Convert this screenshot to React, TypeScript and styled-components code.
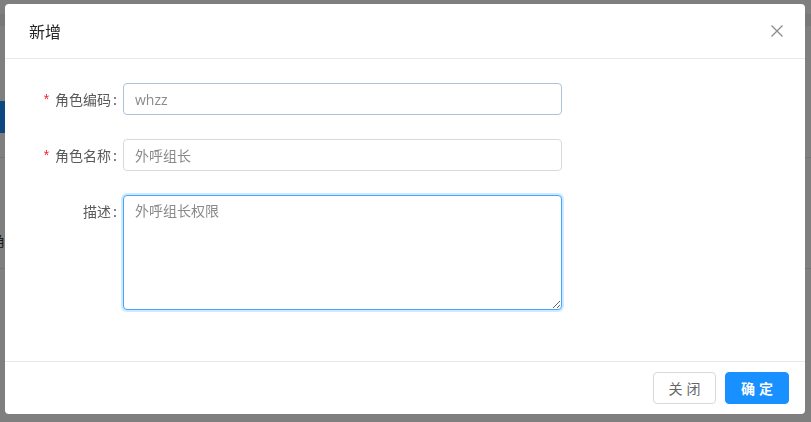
import React from 'react';
import styled, { createGlobalStyle } from 'styled-components';

const GlobalStyle = createGlobalStyle`
  html, body {
    margin: 0;
    padding: 0;
    height: 100%;
    overflow: hidden;
  }
  body {
    font-family: "Liberation Sans", "Noto Sans CJK SC", sans-serif;
    font-size: 14px;
    background: #fff;
  }
  #root {
    height: 100%;
  }
`;

// page behind the mask
const Page = styled.div`
  height: 100%;
  display: flex;
  flex-direction: column;
`;

const PageTop = styled.div`
  height: 14px;
  background: #fff;
`;

const PageHeader = styled.div`
  height: 12px;
  background: #f0f0f0;
`;

const PageBody = styled.div`
  padding-top: 75px;
  display: flex;
  flex-direction: column;
`;

const SideItem = styled.div<{ $active?: boolean }>`
  height: 32px;
  width: 120px;
  background: ${p => (p.$active ? '#1890ff' : 'transparent')};
`;

const RowLine = styled.div<{ $h: number }>`
  height: ${p => p.$h}px;
  border-bottom: 1px solid #e8e8e8;
  font-size: 14px;
  display: flex;
  align-items: flex-end;
  padding-bottom: 18px;
  box-sizing: border-box;
  margin-left: -9px;
  font-family: "Noto Sans CJK SC", sans-serif;
  color: #333;
`;

// modal
const Mask = styled.div`
  position: fixed;
  inset: 0;
  background: rgba(0, 0, 0, 0.5);
  display: flex;
  align-items: flex-start;
  justify-content: flex-start;
  padding: 4px 0 0 5px;
`;

const Dialog = styled.div`
  width: 800px;
  height: 410px;
  background: #fff;
  border-radius: 4px;
  display: flex;
  flex-direction: column;
  overflow: hidden;
`;

const Header = styled.div`
  height: 54px;
  border-bottom: 1px solid #e8e8e8;
  display: flex;
  align-items: center;
  justify-content: space-between;
  padding: 0 18px 0 24px;
`;

const Title = styled.div`
  font-family: "Noto Sans CJK SC", sans-serif;
  font-size: 16px;
  color: #262626;
`;

const CloseButton = styled.button`
  border: none;
  background: none;
  padding: 0;
  width: 20px;
  height: 20px;
  display: flex;
  align-items: center;
  justify-content: center;
  color: #8c8c8c;
  cursor: pointer;
`;

const Body = styled.div`
  flex: 1;
  padding: 24px 24px 0 24px;
  display: flex;
  flex-direction: column;
  gap: 24px;
`;

const FormRow = styled.div<{ $top?: boolean }>`
  display: flex;
  align-items: ${p => (p.$top ? 'flex-start' : 'center')};
`;

const Label = styled.label<{ $top?: boolean }>`
  width: 94px;
  flex-shrink: 0;
  display: flex;
  justify-content: flex-end;
  align-items: center;
  font-family: "Noto Sans CJK SC", sans-serif;
  font-size: 14px;
  color: #595959;
  line-height: ${p => (p.$top ? '32px' : 'normal')};
  white-space: nowrap;
`;

const Star = styled.span`
  color: #f5222d;
  margin-right: 6px;
  font-family: "Liberation Sans", sans-serif;
`;

const Colon = styled.span`
  margin: 0 6px 0 2px;
`;

const fieldCss = `
  width: 439px;
  box-sizing: border-box;
  border-radius: 4px;
  border: 1px solid #d9d9d9;
  padding: 4px 11px;
  font-family: "Open Sans", "Noto Sans CJK SC", sans-serif;
  font-size: 14px;
  color: #8a8a8a;
  background: #fff;
  outline: none;
`;

const Input = styled.input<{ $hover?: boolean }>`
  ${fieldCss}
  height: 32px;
  border-color: ${p => (p.$hover ? '#a9c4dc' : '#d9d9d9')};
`;

const TextArea = styled.textarea`
  ${fieldCss}
  height: 115px;
  line-height: 1.5;
  border-color: #40a9ff;
  box-shadow: 0 0 0 2px rgba(24, 144, 255, 0.2);
  resize: both;
  font-family: "Noto Sans CJK SC", sans-serif;
`;

const Footer = styled.div`
  height: 52px;
  border-top: 1px solid #e8e8e8;
  display: flex;
  align-items: center;
  justify-content: flex-end;
  gap: 9px;
  padding: 0 16px;
`;

const Button = styled.button<{ $primary?: boolean }>`
  width: ${p => (p.$primary ? '64px' : '63px')};
  height: 32px;
  border-radius: 4px;
  font-family: "Noto Sans CJK SC", sans-serif;
  font-size: 14px;
  letter-spacing: 4px;
  text-indent: 4px;
  cursor: pointer;
  border: 1px solid ${p => (p.$primary ? '#1890ff' : '#d9d9d9')};
  background: ${p => (p.$primary ? '#1890ff' : '#fff')};
  color: ${p => (p.$primary ? '#fff' : '#666')};
  font-weight: ${p => (p.$primary ? 700 : 400)};
`;

const CloseIcon = () => (
  <svg width="14" height="14" viewBox="0 0 14 14" fill="none" stroke="currentColor" strokeWidth="1.3">
    <path d="M1.5 1.5 L12.5 12.5 M12.5 1.5 L1.5 12.5" />
  </svg>
);

export default function App() {
  return (
    <>
      <GlobalStyle />
      <Page>
        <PageTop />
        <PageHeader />
        <PageBody>
          <SideItem $active />
          <RowLine $h={25} />
          <RowLine $h={111}>角色</RowLine>
        </PageBody>
      </Page>
      <Mask>
        <Dialog>
          <Header>
            <Title>新增</Title>
            <CloseButton aria-label="close">
              <CloseIcon />
            </CloseButton>
          </Header>
          <Body>
            <FormRow>
              <Label>
                <Star>*</Star>角色编码<Colon>:</Colon>
              </Label>
              <Input $hover defaultValue="whzz" />
            </FormRow>
            <FormRow>
              <Label>
                <Star>*</Star>角色名称<Colon>:</Colon>
              </Label>
              <Input defaultValue="外呼组长" />
            </FormRow>
            <FormRow $top>
              <Label $top>
                描述<Colon>:</Colon>
              </Label>
              <TextArea defaultValue="外呼组长权限" />
            </FormRow>
          </Body>
          <Footer>
            <Button>关闭</Button>
            <Button $primary>确定</Button>
          </Footer>
        </Dialog>
      </Mask>
    </>
  );
}
